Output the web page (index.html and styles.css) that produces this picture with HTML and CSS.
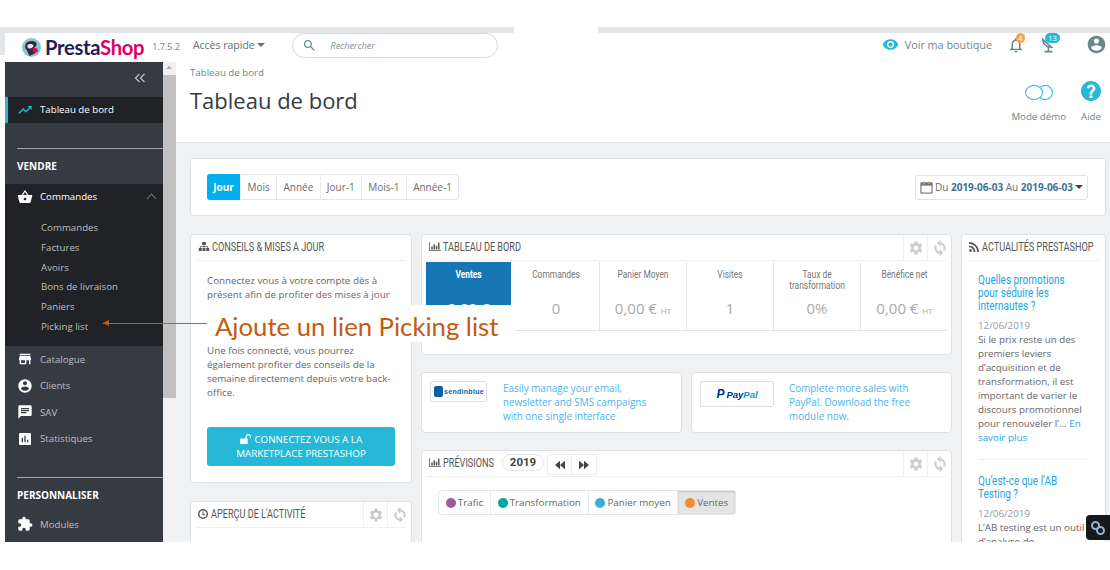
FILE: index.html
```html
<!DOCTYPE html>
<html lang="fr">
<head>
<meta charset="utf-8">
<title>PrestaShop - Tableau de bord</title>
<link rel="stylesheet" href="styles.css">
</head>
<body>
<svg class="defs" width="0" height="0" aria-hidden="true">
  <symbol id="i-trend" viewBox="0 0 24 24"><path d="M16 6l2.29 2.29-4.88 4.88-4-4L2 16.59 3.41 18l6-6 4 4 6.3-6.29L22 12V6z"/></symbol>
  <symbol id="i-basket" viewBox="0 0 24 24"><path d="M17.21 9l-4.38-6.56c-.19-.28-.51-.42-.83-.42-.32 0-.64.14-.83.43L6.79 9H2c-.55 0-1 .45-1 1 0 .09.01.18.04.27l2.54 9.27c.23.84 1 1.46 1.92 1.46h13c.92 0 1.69-.62 1.93-1.46l2.54-9.27L23 10c0-.55-.45-1-1-1h-4.79zM9 9l3-4.4L15 9H9zm3 8c-1.1 0-2-.9-2-2s.9-2 2-2 2 .9 2 2-.9 2-2 2z"/></symbol>
  <symbol id="i-store" viewBox="0 0 24 24"><path d="M20 4H4v2h16V4zm1 10v-2l-1-5H4l-1 5v2h1v6h10v-6h4v6h2v-6h1zm-9 4H6v-4h6v4z"/></symbol>
  <symbol id="i-account" viewBox="0 0 24 24"><path d="M12 2C6.48 2 2 6.48 2 12s4.48 10 10 10 10-4.48 10-10S17.52 2 12 2zm0 3c1.66 0 3 1.34 3 3s-1.34 3-3 3-3-1.34-3-3 1.34-3 3-3zm0 14.2c-2.5 0-4.71-1.28-6-3.22.03-1.99 4-3.08 6-3.08 1.99 0 5.97 1.09 6 3.08-1.29 1.94-3.5 3.22-6 3.22z"/></symbol>
  <symbol id="i-chat" viewBox="0 0 24 24"><path d="M20 2H4c-1.1 0-1.99.9-1.99 2L2 22l4-4h14c1.1 0 2-.9 2-2V4c0-1.1-.9-2-2-2zM6 9h12v2H6V9zm8 5H6v-2h8v2zm4-6H6V6h12v2z"/></symbol>
  <symbol id="i-stats" viewBox="0 0 24 24"><path d="M19 3H5c-1.1 0-2 .9-2 2v14c0 1.1.9 2 2 2h14c1.1 0 2-.9 2-2V5c0-1.1-.9-2-2-2zM9 17H7v-7h2v7zm4 0h-2V7h2v10zm4 0h-2v-4h2v4z"/></symbol>
  <symbol id="i-puzzle" viewBox="0 0 24 24"><path d="M20.5 11H19V7c0-1.1-.9-2-2-2h-4V3.5C13 2.12 11.88 1 10.5 1S8 2.12 8 3.5V5H4c-1.1 0-1.99.9-1.99 2v3.8H3.5c1.49 0 2.7 1.21 2.7 2.7s-1.21 2.7-2.7 2.7H2V20c0 1.1.9 2 2 2h3.8v-1.5c0-1.49 1.21-2.7 2.7-2.7 1.49 0 2.7 1.21 2.7 2.7V22H17c1.1 0 2-.9 2-2v-4h1.5c1.38 0 2.5-1.12 2.5-2.5S21.88 11 20.5 11z"/></symbol>
  <symbol id="i-eye" viewBox="0 0 24 24"><path d="M12 4.5C7 4.5 2.73 7.61 1 12c1.73 4.39 6 7.5 11 7.5s9.27-3.11 11-7.5c-1.73-4.39-6-7.5-11-7.5zM12 17c-2.76 0-5-2.24-5-5s2.24-5 5-5 5 2.24 5 5-2.24 5-5 5zm0-8c-1.66 0-3 1.34-3 3s1.34 3 3 3 3-1.34 3-3-1.34-3-3-3z"/></symbol>
  <symbol id="i-bell" viewBox="0 0 24 24"><path d="M12 22c1.1 0 2-.9 2-2h-4c0 1.1.9 2 2 2zm6-6v-5c0-3.07-1.63-5.64-4.5-6.32V4c0-.83-.67-1.5-1.5-1.5s-1.5.67-1.5 1.5v.68C7.64 5.36 6 7.92 6 11v5l-2 2v1h16v-1l-2-2zm-2 1H8v-6c0-2.48 1.51-4.5 4-4.5s4 2.02 4 4.5v6z"/></symbol>
  <symbol id="i-help" viewBox="0 0 24 24"><path d="M12 2C6.48 2 2 6.48 2 12s4.48 10 10 10 10-4.48 10-10S17.52 2 12 2zm1.4 17h-2.8v-2.6h2.8V19zm2.2-7.4l-.9.9c-.9.8-1.3 1.4-1.3 3h-2.8v-.6c0-1.2.5-2.3 1.3-3.1l1.3-1.3c.3-.3.5-.7.5-1.2 0-.9-.8-1.6-1.7-1.6s-1.7.7-1.7 1.6H7.6C7.6 7.6 9.6 5.6 12 5.6s4.4 2 4.4 4.4c0 .6-.3 1.2-.8 1.6z"/></symbol>
  <symbol id="i-search" viewBox="0 0 24 24"><path d="M15.5 14h-.79l-.28-.27C15.41 12.59 16 11.11 16 9.5 16 5.91 13.09 3 9.5 3S3 5.91 3 9.5 5.91 16 9.5 16c1.61 0 3.09-.59 4.23-1.57l.27.28v.79l5 4.99L20.49 19l-4.99-5zm-6 0C7.01 14 5 11.99 5 9.5S7.01 5 9.5 5 14 7.01 14 9.5 11.99 14 9.5 14z"/></symbol>
  <symbol id="i-gear" viewBox="0 0 24 24"><path d="M19.14 12.94c.04-.3.06-.61.06-.94 0-.32-.02-.64-.07-.94l2.03-1.58c.18-.14.23-.41.12-.61l-1.92-3.32c-.12-.22-.37-.29-.59-.22l-2.39.96c-.5-.38-1.03-.7-1.62-.94l-.36-2.54c-.04-.24-.24-.41-.48-.41h-3.84c-.24 0-.43.17-.47.41l-.36 2.54c-.59.24-1.13.57-1.62.94l-2.39-.96c-.22-.08-.47 0-.59.22L2.74 8.87c-.12.21-.08.47.12.61l2.03 1.58c-.05.3-.09.63-.09.94s.02.64.07.94l-2.03 1.58c-.18.14-.23.41-.12.61l1.92 3.32c.12.22.37.29.59.22l2.39-.96c.5.38 1.03.7 1.62.94l.36 2.54c.05.24.24.41.48.41h3.84c.24 0 .44-.17.47-.41l.36-2.54c.59-.24 1.13-.56 1.62-.94l2.39.96c.22.08.47 0 .59-.22l1.92-3.32c.12-.22.07-.47-.12-.61l-2.01-1.58zM12 15.6c-1.98 0-3.6-1.62-3.6-3.6s1.62-3.6 3.6-3.6 3.6 1.62 3.6 3.6-1.62 3.6-3.6 3.6z"/></symbol>
  <symbol id="i-sync" viewBox="0 0 24 24"><path d="M12 4V1L8 5l4 4V6c3.31 0 6 2.69 6 6 0 1.01-.25 1.97-.7 2.8l1.46 1.46C19.54 15.03 20 13.57 20 12c0-4.42-3.58-8-8-8zm0 14c-3.31 0-6-2.69-6-6 0-1.01.25-1.97.7-2.8L5.24 7.74C4.46 8.97 4 10.43 4 12c0 4.42 3.58 8 8 8v3l4-4-4-4v3z" stroke="currentColor" stroke-width="1.200"/></symbol>
  <symbol id="i-bars" viewBox="0 0 16 14"><path d="M0 1h1v11h15v1H0z"/><path d="M3 7h2v4H3zM6 4h2v7H6zM9 6h2v5H9zM12 2h2v9h-2z"/></symbol>
  <symbol id="i-sitemap" viewBox="0 0 16 14"><path d="M5.500 1h5v4h-2v1.500h5V9H15v4h-4V9h1.500V7.500h-4V9H10v4H6V9h1.500V7.500h-4V9H5v4H1V9h1.500V6.500h5V5h-2z"/></symbol>
  <symbol id="i-rss" viewBox="0 0 14 14"><path d="M0 0c7.700 0 14 6.300 14 14h-2.500C11.500 7.600 6.400 2.500 0 2.500z"/><path d="M0 5c5 0 9 4 9 9H6.500C6.500 10.400 3.600 7.500 0 7.500z"/><circle cx="2" cy="12" r="2"/></symbol>
  <symbol id="i-clock" viewBox="0 0 14 14"><path d="M7 0a7 7 0 1 0 0 14A7 7 0 0 0 7 0zm0 12A5 5 0 1 1 7 2a5 5 0 0 1 0 10z"/><path d="M6.300 3.500h1.400v3.800H10v1.300H6.300z"/></symbol>
  <symbol id="i-unlock" viewBox="0 0 14 12"><path d="M0 5.500h8.500c.3 0 .5.200.5.500v5.500c0 .3-.2.500-.5.500H.5c-.3 0-.5-.2-.5-.5z"/><path d="M6.500 5.500V3.200C6.500 1.400 8 0 9.800 0S13 1.400 13 3.200V5h-1.500V3.200c0-.9-.8-1.700-1.700-1.700S8 2.300 8 3.200v2.300z"/></symbol>
  <symbol id="i-rewind" viewBox="0 0 14 12"><path d="M7 1v10L1 6zM13 1v10L7 6z"/></symbol>
  <symbol id="i-forward" viewBox="0 0 14 12"><path d="M1 1v10l6-5zM7 1v10l6-5z"/></symbol>
  <symbol id="i-cal" viewBox="0 0 14 14"><path d="M1 2h12v11H1z" fill="none" stroke="#555" stroke-width="1"/><path d="M1 2h12v3H1z" fill="#777"/><path d="M3.500 .5h1.500v3H3.500zM9 .5h1.500v3H9z" fill="#d09a50"/></symbol>
</svg>

<div class="band"><span class="band-a"></span><span class="band-gap"></span><span class="band-b"></span></div>

<header class="topbar">
  <span class="strip"></span>
  <div class="logo">
    <svg class="puffin" width="19" height="19" viewBox="0 0 20 20" aria-hidden="true">
      <circle cx="10" cy="10" r="10" fill="#8fc4cd"/>
      <path d="M4 6c2-3 8-4 11-1 1 2 0 4-2 5l1 6-6 3-3-6C3 11 3 8 4 6z" fill="#2d2a3c"/>
      <path d="M6 7c2-1 5-1 6 1 0 2-2 3-4 3S5 9 6 7z" fill="#e9ecee"/>
      <path d="M11 10l5 1 1 3-5 3z" fill="#df0067"/>
    </svg>
    <span class="brand"><span class="brand-a">Presta</span><span class="brand-b">Shop</span></span>
  </div>
  <span class="version">1.7.5.2</span>
  <span class="quick">Accès rapide <span class="caret"></span></span>
  <div class="search">
    <svg class="ico-search"><use href="#i-search"/></svg>
    <span class="search-text">Rechercher</span>
  </div>
  <div class="top-right">
    <svg class="ico-eye"><use href="#i-eye"/></svg>
    <span class="shop-link">Voir ma boutique</span>
    <span class="notif notif-bell">
      <svg class="ico-bell"><use href="#i-bell"/></svg>
      <span class="badge badge-orange">4</span>
    </span>
    <span class="notif notif-desk">
      <svg class="ico-desk" viewBox="0 0 16 18" aria-hidden="true"><path d="M2 2c0 5 4 9 10 9zM8.500 11v4M4 16h9" fill="none" stroke="#6c868e" stroke-width="1.800"/></svg>
      <span class="badge badge-blue">13</span>
    </span>
    <svg class="ico-user"><use href="#i-account"/></svg>
  </div>
</header>

<div class="app">
  <nav class="sidebar">
    <div class="collapse"><svg width="12" height="10" viewBox="0 0 12 10" aria-hidden="true"><path d="M5.500 1L1.500 5l4 4M10.500 1l-4 4 4 4" fill="none" stroke="#bebebe" stroke-width="1.300"/></svg></div>
    <a class="nav-item nav-active"><svg class="nav-ico ico-cyan"><use href="#i-trend"/></svg>Tableau de bord</a>
    <div class="nav-sec"><span>VENDRE</span></div>
    <div class="nav-open">
      <a class="nav-item nav-parent"><svg class="nav-ico"><use href="#i-basket"/></svg>Commandes<span class="chev"></span></a>
      <ul class="subnav">
        <li>Commandes</li>
        <li>Factures</li>
        <li>Avoirs</li>
        <li>Bons de livraison</li>
        <li>Paniers</li>
        <li>Picking list</li>
      </ul>
    </div>
    <a class="nav-item"><svg class="nav-ico"><use href="#i-store"/></svg>Catalogue</a>
    <a class="nav-item"><svg class="nav-ico"><use href="#i-account"/></svg>Clients</a>
    <a class="nav-item"><svg class="nav-ico"><use href="#i-chat"/></svg>SAV</a>
    <a class="nav-item"><svg class="nav-ico"><use href="#i-stats"/></svg>Statistiques</a>
    <div class="nav-sec nav-sec-b"><span>PERSONNALISER</span></div>
    <a class="nav-item nav-mod"><svg class="nav-ico"><use href="#i-puzzle"/></svg>Modules</a>
  </nav>
  <div class="scrollbar"><span class="scroll-up"></span><span class="scroll-thumb"></span></div>

  <main class="main">
    <section class="page-head">
      <div class="head-left">
        <div class="crumb">Tableau de bord</div>
        <h1>Tableau de bord</h1>
      </div>
      <div class="head-tools">
        <div class="tool tool-demo">
          <span class="toggle"><span class="ring ring-a"></span><span class="ring ring-b"></span></span>
          <span class="tool-label">Mode démo</span>
        </div>
        <div class="tool">
          <svg class="ico-help"><use href="#i-help"/></svg>
          <span class="tool-label">Aide</span>
        </div>
      </div>
    </section>

    <div class="content">
      <section class="card period-card">
        <div class="periods">
          <span class="period period-on">Jour</span><span class="period">Mois</span><span class="period">Année</span><span class="period">Jour-1</span><span class="period">Mois-1</span><span class="period">Année-1</span>
        </div>
        <div class="date-btn">
          <svg class="ico-cal"><use href="#i-cal"/></svg>
          <span>Du <b>2019-06-03</b> Au <b>2019-06-03</b></span>
          <span class="caret caret-dark"></span>
        </div>
      </section>

      <div class="grid">
        <div class="col">
          <section class="card tips">
            <header class="card-head"><svg class="h-ico"><use href="#i-sitemap"/></svg><span class="ttl">Conseils &amp; mises a jour</span></header>
            <div class="tips-body">
              <p>Connectez vous à votre compte dès à présent afin de profiter des mises à jour (modules et thèmes) de votre boutique.</p>
              <p>Une fois connecté, vous pourrez également profiter des conseils de la semaine directement depuis votre back-office.</p>
              <a class="cta"><svg class="ico-unlock"><use href="#i-unlock"/></svg> CONNECTEZ VOUS A LA MARKETPLACE PRESTASHOP</a>
            </div>
          </section>
          <section class="card activity">
            <header class="card-head"><svg class="h-ico h-ico-sq"><use href="#i-clock"/></svg><span class="ttl">Aperçu de l'activité</span>
              <span class="head-actions"><span class="act"><svg><use href="#i-gear"/></svg></span><span class="act"><svg><use href="#i-sync"/></svg></span></span>
            </header>
          </section>
        </div>

        <div class="col">
          <section class="card dash">
            <header class="card-head"><svg class="h-ico"><use href="#i-bars"/></svg><span class="ttl">Tableau de bord</span>
              <span class="head-actions"><span class="act"><svg><use href="#i-gear"/></svg></span><span class="act"><svg><use href="#i-sync"/></svg></span></span>
            </header>
            <div class="stats">
              <div class="stat stat-on"><div class="stat-name">Ventes</div><div class="stat-val">0,00 €</div></div>
              <div class="stat"><div class="stat-name">Commandes</div><div class="stat-val">0</div></div>
              <div class="stat"><div class="stat-name">Panier Moyen</div><div class="stat-val">0,00 € <small>HT</small></div></div>
              <div class="stat"><div class="stat-name">Visites</div><div class="stat-val">1</div></div>
              <div class="stat"><div class="stat-name">Taux de transformation</div><div class="stat-val">0%</div></div>
              <div class="stat"><div class="stat-name">Bénéfice net</div><div class="stat-val">0,00 € <small>HT</small></div></div>
            </div>
          </section>

          <div class="partners">
            <section class="card partner">
              <div class="p-logo p-logo-sib"><span class="sib-mark"></span><span class="sib-text">sendinblue</span></div>
              <a class="p-text">Easily manage your email, newsletter and SMS campaigns with one single interface</a>
            </section>
            <section class="card partner">
              <div class="p-logo p-logo-pp"><span class="pp-p">P</span><span class="pp-a">Pay</span><span class="pp-b">Pal</span></div>
              <a class="p-text">Complete more sales with PayPal. Download the free module now.</a>
            </section>
          </div>

          <section class="card forecast">
            <header class="card-head"><svg class="h-ico"><use href="#i-bars"/></svg><span class="ttl ttl-fc">Prévisions</span>
              <span class="year">2019</span>
              <span class="arrows"><span class="arrow"><svg><use href="#i-rewind"/></svg></span><span class="arrow"><svg><use href="#i-forward"/></svg></span></span>
              <span class="head-actions"><span class="act"><svg><use href="#i-gear"/></svg></span><span class="act"><svg><use href="#i-sync"/></svg></span></span>
            </header>
            <div class="legend">
              <span class="leg"><i class="dot dot-purple"></i>Trafic</span><span class="leg"><i class="dot dot-green"></i>Transformation</span><span class="leg"><i class="dot dot-blue"></i>Panier moyen</span><span class="leg leg-on"><i class="dot dot-orange"></i>Ventes</span>
            </div>
          </section>
        </div>

        <div class="col">
          <section class="card news">
            <header class="card-head"><svg class="h-ico h-ico-sq"><use href="#i-rss"/></svg><span class="ttl">Actualités PrestaShop</span></header>
            <article class="post post-line">
              <h3>Quelles promotions pour séduire les internautes ?</h3>
              <div class="post-date">12/06/2019</div>
              <p>Si le prix reste un des premiers leviers d’acquisition et de transformation, il est important de varier le discours promotionnel pour renouveler l’... <a>En savoir plus</a></p>
            </article>
            <article class="post post-next">
              <h3>Qu’est-ce que l’AB Testing ?</h3>
              <div class="post-date">12/06/2019</div>
              <p>L’AB testing est un outil d’analyse de</p>
            </article>
          </section>
        </div>
      </div>
    </div>
  </main>

  <div class="callout">
    <span class="callout-line"></span>
    <span class="callout-text">Ajoute un lien Picking list</span>
  </div>
  <div class="connector">
    <svg width="16" height="16" viewBox="0 0 16 16" aria-hidden="true"><circle cx="5.500" cy="5.500" r="3.500" fill="none" stroke="#8db4d2" stroke-width="2"/><circle cx="10.500" cy="10.500" r="3.500" fill="none" stroke="#8db4d2" stroke-width="2"/></svg>
  </div>
</div>
</body>
</html>
```
FILE: styles.css
```css
* { box-sizing: border-box; }
html, body { margin: 0; padding: 0; background: #fff; }
body { font-family: "Open Sans", sans-serif; font-size: 9.800px; color: #6c6c6c; height: 570px; overflow: hidden; }
.defs { position: absolute; }
a { color: inherit; text-decoration: none; }
svg { fill: currentColor; display: block; }

.band { height: 33px; padding-top: 27px; display: flex; }
.band-a { width: 514px; background: #e3e6e9; }
.band-gap { width: 84px; }
.band-b { flex: 1; background: #e3e6e9; }

.topbar { height: 29px; display: flex; align-items: flex-start; }
.strip { width: 5px; height: 22px; background: #e3e6e9; flex: none; }
.logo { display: flex; align-items: center; margin: 2px 0 0 17px; gap: 4px; }
.brand { font-family: "Lato", sans-serif; font-size: 20.200px; font-weight: 700; line-height: 24px; letter-spacing: -.3px; }
.brand-a { color: #251b5b; }
.brand-b { color: #df0067; }
.version { font-size: 9px; color: #6c868e; margin: 7px 0 0 8px; line-height: 13px; }
.quick { font-size: 10.500px; color: #5e7178; margin: 5px 0 0 13px; line-height: 15px; white-space: nowrap; }
.caret { display: inline-block; border: 4px solid transparent; border-top-color: #5e7178; border-bottom: 0; vertical-align: 2px; }
.search { width: 206px; height: 25px; border: 1px solid #cfdde2; border-radius: 13px; margin: 0 0 0 27px; display: flex; align-items: center; padding-left: 9px; }
.ico-search { width: 15px; height: 15px; color: #6c868e; }
.search-text { font-style: italic; font-size: 9px; color: #7d8f96; margin-left: 13px; }
.top-right { margin-left: auto; display: flex; align-items: flex-start; color: #6c868e; }
.ico-eye { width: 17px; height: 17px; color: #25b9d7; margin: 3px 6px 0 0; }
.shop-link { font-size: 10.800px; color: #6c868e; line-height: 15px; margin: 4px 15px 0 0; }
.notif { position: relative; display: block; width: 26px; height: 24px; }
.ico-bell { width: 18px; height: 18px; margin-top: 3px; color: #6c868e; }
.ico-desk { width: 14px; height: 17px; margin: 4px 0 0 2px; }
.notif-desk { margin-left: 6px; width: 47px; }
.badge { position: absolute; top: 0; font-size: 7.500px; color: #fff; line-height: 10px; height: 10px; border-radius: 6px; text-align: center; }
.badge-orange { left: 9px; width: 9px; background: #f0a94a; }
.badge-blue { left: 6px; width: 15px; background: #25b9d7; }
.ico-user { width: 21px; height: 21px; color: #6c868e; margin: 1px 3px 0 0; }

.app { height: 480px; display: flex; position: relative; overflow: hidden; }
.sidebar { width: 158px; margin-left: 5px; background: #363a41; flex: none; color: #bebebe; font-size: 9.700px; }
.collapse { height: 35px; display: flex; justify-content: flex-end; padding: 11px 17px 0 0; }
.nav-item { display: flex; align-items: center; height: 26.500px; padding-left: 12px; color: #bebebe; }
.nav-ico { width: 16px; height: 16px; color: #fff; margin-right: 7px; flex: none; }
.ico-cyan { color: #25b9d7; }
.nav-active { background: #202226; color: #fff; height: 26px; border-left: 3px solid #25b9d7; padding-left: 9px; padding-bottom: 1px; }
.nav-sec { margin: 25px 0 0 12px; border-top: 1px solid #a5a8ab; height: 36px; padding-bottom: 2px; font-size: 10px; font-weight: 700; color: #fff; display: flex; align-items: center; }
.nav-open { background: #202226; height: 162px; }
.nav-parent { color: #fff; position: relative; height: 25px; }
.chev { position: absolute; right: 8px; top: 11px; width: 7px; height: 7px; border-left: 1px solid #6f7276; border-top: 1px solid #6f7276; transform: rotate(45deg); }
.subnav { list-style: none; margin: 9px 0 0; padding: 0 0 0 36px; }
.subnav li { height: 19.800px; line-height: 20px; }
.nav-mod { margin-top: -2px; }

.scrollbar { width: 13px; background: #f1f1f1; flex: none; display: flex; flex-direction: column; }
.scroll-up { height: 13px; display: block; position: relative; }
.scroll-up::after { content: ""; position: absolute; left: 3px; top: 4px; border: 3.500px solid transparent; border-bottom-color: #a3a3a3; border-top: 0; }
.scroll-thumb { height: 323px; background: #c1c1c1; display: block; }

.main { flex: 1; min-width: 0; background: #eff1f2; }
.page-head { height: 81px; background: #fff; border-bottom: 1px solid #dfe3e6; padding: 4px 7px 0 14px; display: flex; justify-content: space-between; }
.crumb { font-size: 9.700px; color: #6c868e; line-height: 14px; }
h1 { margin: 5px 0 0; font-size: 22px; font-weight: 400; color: #363a41; line-height: 30px; }
.head-tools { display: flex; gap: 13px; padding-top: 16px; }
.tool { display: flex; flex-direction: column; align-items: center; }
.tool-label { font-size: 9.700px; color: #6c868e; line-height: 14px; margin-top: 8px; }
.tool-demo .tool-label { margin-top: 10px; }
.toggle { display: flex; height: 15px; margin-top: 3px; }
.ring { width: 16px; height: 15px; border: 1.500px solid #25b9d7; border-radius: 50%; display: block; background: #fff; }
.ring-a { position: relative; z-index: 1; width: 18px; }
.ring-b { margin-left: -6px; }
.ico-help { width: 24px; height: 24px; color: #25b9d7; margin: -3px 0 -1px; }

.content { padding: 15px 4px 0 14px; }
.card { background: #fff; border: 1px solid #dde1e4; border-radius: 4px; }
.period-card { height: 58px; display: flex; align-items: center; justify-content: space-between; padding: 0 17px 0 16px; margin-bottom: 18px; }
.periods { display: flex; border: 1px solid #e3e6e8; border-radius: 3px; height: 26px; }
.period { padding: 0 6.300px; line-height: 24px; border-right: 1px solid #e8eaec; color: #6c6c6c; font-size: 10px; }
.period:last-child { border-right: 0; }
.period-on { background: #00aff0; color: #fff; font-weight: 700; margin: -1px 0 -1px -1px; line-height: 26px; border-radius: 3px 0 0 3px; }
.date-btn { height: 25px; border: 1px solid #e0e3e6; border-radius: 3px; display: flex; align-items: center; padding: 0 4px; gap: 2px; color: #6c6c6c; font-size: 10px; }
.date-btn b { color: #3d7396; }
.ico-cal { width: 13px; height: 13px; }
.caret-dark { border-top-color: #444; vertical-align: middle; }

.grid { display: grid; grid-template-columns: 222px 531px 145px; column-gap: 9px; align-items: start; }
.col { display: flex; flex-direction: column; }
.card-head { position: relative; height: 26px; margin: 0 5px; padding: 0 0 2px 2px; border-bottom: 1px solid #eef0f1; display: flex; align-items: center; color: #555; white-space: nowrap; }
.ttl { display: block; font-family: "Roboto", sans-serif; font-size: 12.500px; text-transform: uppercase; transform: scaleX(.73); transform-origin: 0 50%; }
.ttl-fc { width: 51px; flex: none; }
.h-ico { width: 12px; height: 11px; margin-right: 2px; flex: none; color: #555; }
.h-ico-sq { width: 10px; height: 10px; margin-right: 3px; }
.head-actions { position: absolute; right: -5px; top: 0; height: 26px; display: flex; }
.act { width: 24px; border-left: 1px solid #eef0f1; display: flex; align-items: center; justify-content: center; color: #ccc; }
.act svg { width: 16px; height: 16px; }

.tips { height: 249px; margin-bottom: 18px; }
.tips-body { padding: 13px 16px 0; }
.tips-body p { margin: 0; line-height: 14px; color: #666; }
.tips-body p:first-child { height: 70px; }
.cta { display: block; height: 39px; background: #25b9d7; border-radius: 3px; margin-top: 27px; color: #fff; text-align: center; padding: 6px 12px; line-height: 14px; font-size: 9.800px; }
.ico-unlock { display: inline-block; width: 12px; height: 10px; vertical-align: -1px; }
.activity { height: 60px; }

.dash { height: 121px; margin-bottom: 17px; }
.stats { display: flex; margin: 1px 3px 0 4px; height: 69px; border-bottom: 1px solid #e3e6e8; }
.stat { width: 87px; border-right: 1px solid #e3e6e8; text-align: center; color: #999; padding-top: 7px; }
.stat:last-child { border-right: 0; }
.stat-name { font-family: "Roboto", sans-serif; font-size: 11.500px; line-height: 11px; height: 23px; color: #777; padding: 0 10px; width: 137%; transform: scaleX(.73); transform-origin: 0 0; }
.stat-val { font-size: 15px; line-height: 20px; margin-top: 6px; color: #aaa; }
.stat-val small { font-size: 8px; }
.stat-on { background: #1777b6; width: 85px; margin-right: 2px; border-right: 0; color: #fff; }
.stat-on .stat-name { color: #fff; font-weight: 700; }
.stat-on .stat-val { color: #fff; }

.partners { display: grid; grid-template-columns: 1fr 1fr; gap: 9px; margin-bottom: 17px; }
.partner { height: 61px; display: flex; padding: 8px 0 0 8px; }
.p-logo { border: 1px solid #dde1e4; border-radius: 2px; height: 21px; display: flex; align-items: center; flex: none; }
.p-logo-sib { width: 57px; padding-left: 3px; }
.p-logo-pp { width: 74px; height: 26px; justify-content: center; font-style: italic; font-weight: 700; font-family: "Liberation Sans", sans-serif; font-size: 9.500px; }
.sib-mark { width: 9px; height: 11px; background: #0b5ea6; border-radius: 2px; margin-right: 1px; }
.sib-text { font-size: 7px; font-weight: 700; color: #0b5ea6; font-family: "Liberation Sans", sans-serif; letter-spacing: .3px; }
.pp-p { color: #003087; font-size: 12px; margin-right: 2px; }
.pp-a { color: #003087; }
.pp-b { color: #009cde; }
.p-text { color: #4bb4ee; line-height: 14px; font-size: 9.900px; display: block; margin-left: 16px; width: 165px; }
.partner:last-child .p-text { margin-left: 15px; width: 135px; }

.forecast { height: 120px; }
.year { font-family: "Roboto", sans-serif; font-weight: 700; font-size: 11.500px; color: #444; border: 1px solid #e3e6e8; border-radius: 9px; width: 42px; height: 17px; line-height: 15px; text-align: center; margin-left: 8px; flex: none; }
.arrows { display: flex; height: 21px; border: 1px solid #eceef0; margin: 4px 0 0 3px; border-radius: 2px; }
.arrow { width: 24px; display: flex; align-items: center; justify-content: center; color: #444; }
.arrow:first-child { border-right: 1px solid #eceef0; }
.arrow svg { width: 12px; height: 10px; }
.legend { display: inline-flex; margin: 13px 0 0 16px; border: 1px solid #e3e6e8; border-radius: 3px; height: 25px; }
.leg { display: flex; align-items: center; padding: 0 6.800px; border-right: 1px solid #e8eaec; font-size: 9.800px; color: #666; gap: 2px; white-space: nowrap; }
.leg-on { background: #e4e4e4; border-right: 0; box-shadow: inset 0 1px 2px rgba(0,0,0,.15); }
.dot { width: 10px; height: 10px; border-radius: 50%; display: block; }
.dot-purple { background: #9e5ba1; }
.dot-green { background: #00a89c; }
.dot-blue { background: #3aaedf; }
.dot-orange { background: #f38b2c; }

.news { height: 320px; }
.post { margin: 0 16px; padding: 12px 0 0; }
.post-line { border-bottom: 1px solid #eef0f1; padding-bottom: 14px; }
.post-next { padding-top: 14px; }
.post h3 { margin: 0 0 7px; font-family: "Roboto", sans-serif; font-size: 13px; line-height: 13px; font-weight: 400; color: #25a5e6; width: 118%; transform: scaleX(.77); transform-origin: 0 0; }
.post-date { color: #999; line-height: 14px; }
.post p { margin: 0; line-height: 14px; color: #666; }
.post a { color: #25a5e6; }

.callout { position: absolute; left: 103px; top: 243px; height: 37px; display: flex; align-items: center; }
.callout-line { width: 104px; height: 1px; background: #c55a11; position: relative; }
.callout-line::before { content: ""; position: absolute; left: 0; top: -3px; border: 3.500px solid transparent; border-right: 6px solid #c55a11; border-left: 0; }
.callout-text { background: #fff; width: 308px; height: 37px; line-height: 42px; padding-left: 8px; font-family: "Lato", sans-serif; font-size: 25.700px; color: #c55a11; white-space: nowrap; }
.connector { position: absolute; right: 0; top: 453px; width: 24px; height: 25px; background: #16181a; border-radius: 4px 0 0 4px; display: flex; align-items: center; justify-content: center; }
```
